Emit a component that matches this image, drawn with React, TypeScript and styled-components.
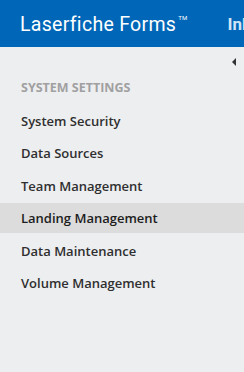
import React from 'react';
import styled, { createGlobalStyle } from 'styled-components';

const GlobalStyle = createGlobalStyle`
  html, body {
    margin: 0;
    padding: 0;
    height: 100%;
    background-color: #edeef0;
  }
  #root {
    height: 100%;
  }
`;

const Page = styled.div`
  display: flex;
  flex-direction: column;
  height: 100vh;
  overflow: hidden;
  background-color: #edeef0;
  font-family: 'Open Sans', sans-serif;
`;

const Header = styled.header`
  display: flex;
  align-items: center;
  height: 47px;
  padding-left: 20px;
  background-color: #0067b8;
  white-space: nowrap;
  overflow: hidden;
`;

const Brand = styled.div`
  font-family: Roboto, sans-serif;
  font-size: 19.5px;
  color: #fff;
  letter-spacing: 0.3px;
  padding-top: 1px;
`;

const Tm = styled.sup`
  font-size: 6px;
  margin-left: 2px;
  vertical-align: 11px;
`;

const NavLink = styled.div`
  margin-left: 40px;
  font-family: Roboto, sans-serif;
  font-size: 17px;
  font-weight: 700;
  color: #cfe5f7;
`;

const CollapseBar = styled.div`
  display: flex;
  justify-content: flex-end;
  padding: 11px 8px 0 0;
  height: 13px;
`;

const Caret = styled.div`
  width: 0;
  height: 0;
  border-top: 4px solid transparent;
  border-bottom: 4px solid transparent;
  border-right: 4px solid #333;
`;

const Menu = styled.nav`
  display: flex;
  flex-direction: column;
  gap: 2.5px;
  padding-top: 2px;
`;

const SectionTitle = styled.div`
  font-size: 12.5px;
  font-weight: 700;
  color: #a0a0a0;
  padding-left: 21px;
  height: 30px;
  line-height: 30px;
`;

const MenuItem = styled.div<{ $active?: boolean }>`
  height: 30px;
  line-height: 30px;
  padding-left: 21px;
  font-size: 13px;
  font-weight: 600;
  color: ${(p) => (p.$active ? '#1d1d1d' : '#2f2f2f')};
  background-color: ${(p) => (p.$active ? '#dcdcdc' : 'transparent')};
`;

const items = [
  'System Security',
  'Data Sources',
  'Team Management',
  'Landing Management',
  'Data Maintenance',
  'Volume Management',
];

export default function App() {
  return (
    <Page>
      <GlobalStyle />
      <Header>
        <Brand>
          Laserfiche Forms<Tm>TM</Tm>
        </Brand>
        <NavLink>Inbox</NavLink>
      </Header>
      <CollapseBar>
        <Caret />
      </CollapseBar>
      <Menu>
        <SectionTitle>SYSTEM SETTINGS</SectionTitle>
        {items.map((name) => (
          <MenuItem key={name} $active={name === 'Landing Management'}>
            {name}
          </MenuItem>
        ))}
      </Menu>
    </Page>
  );
}
